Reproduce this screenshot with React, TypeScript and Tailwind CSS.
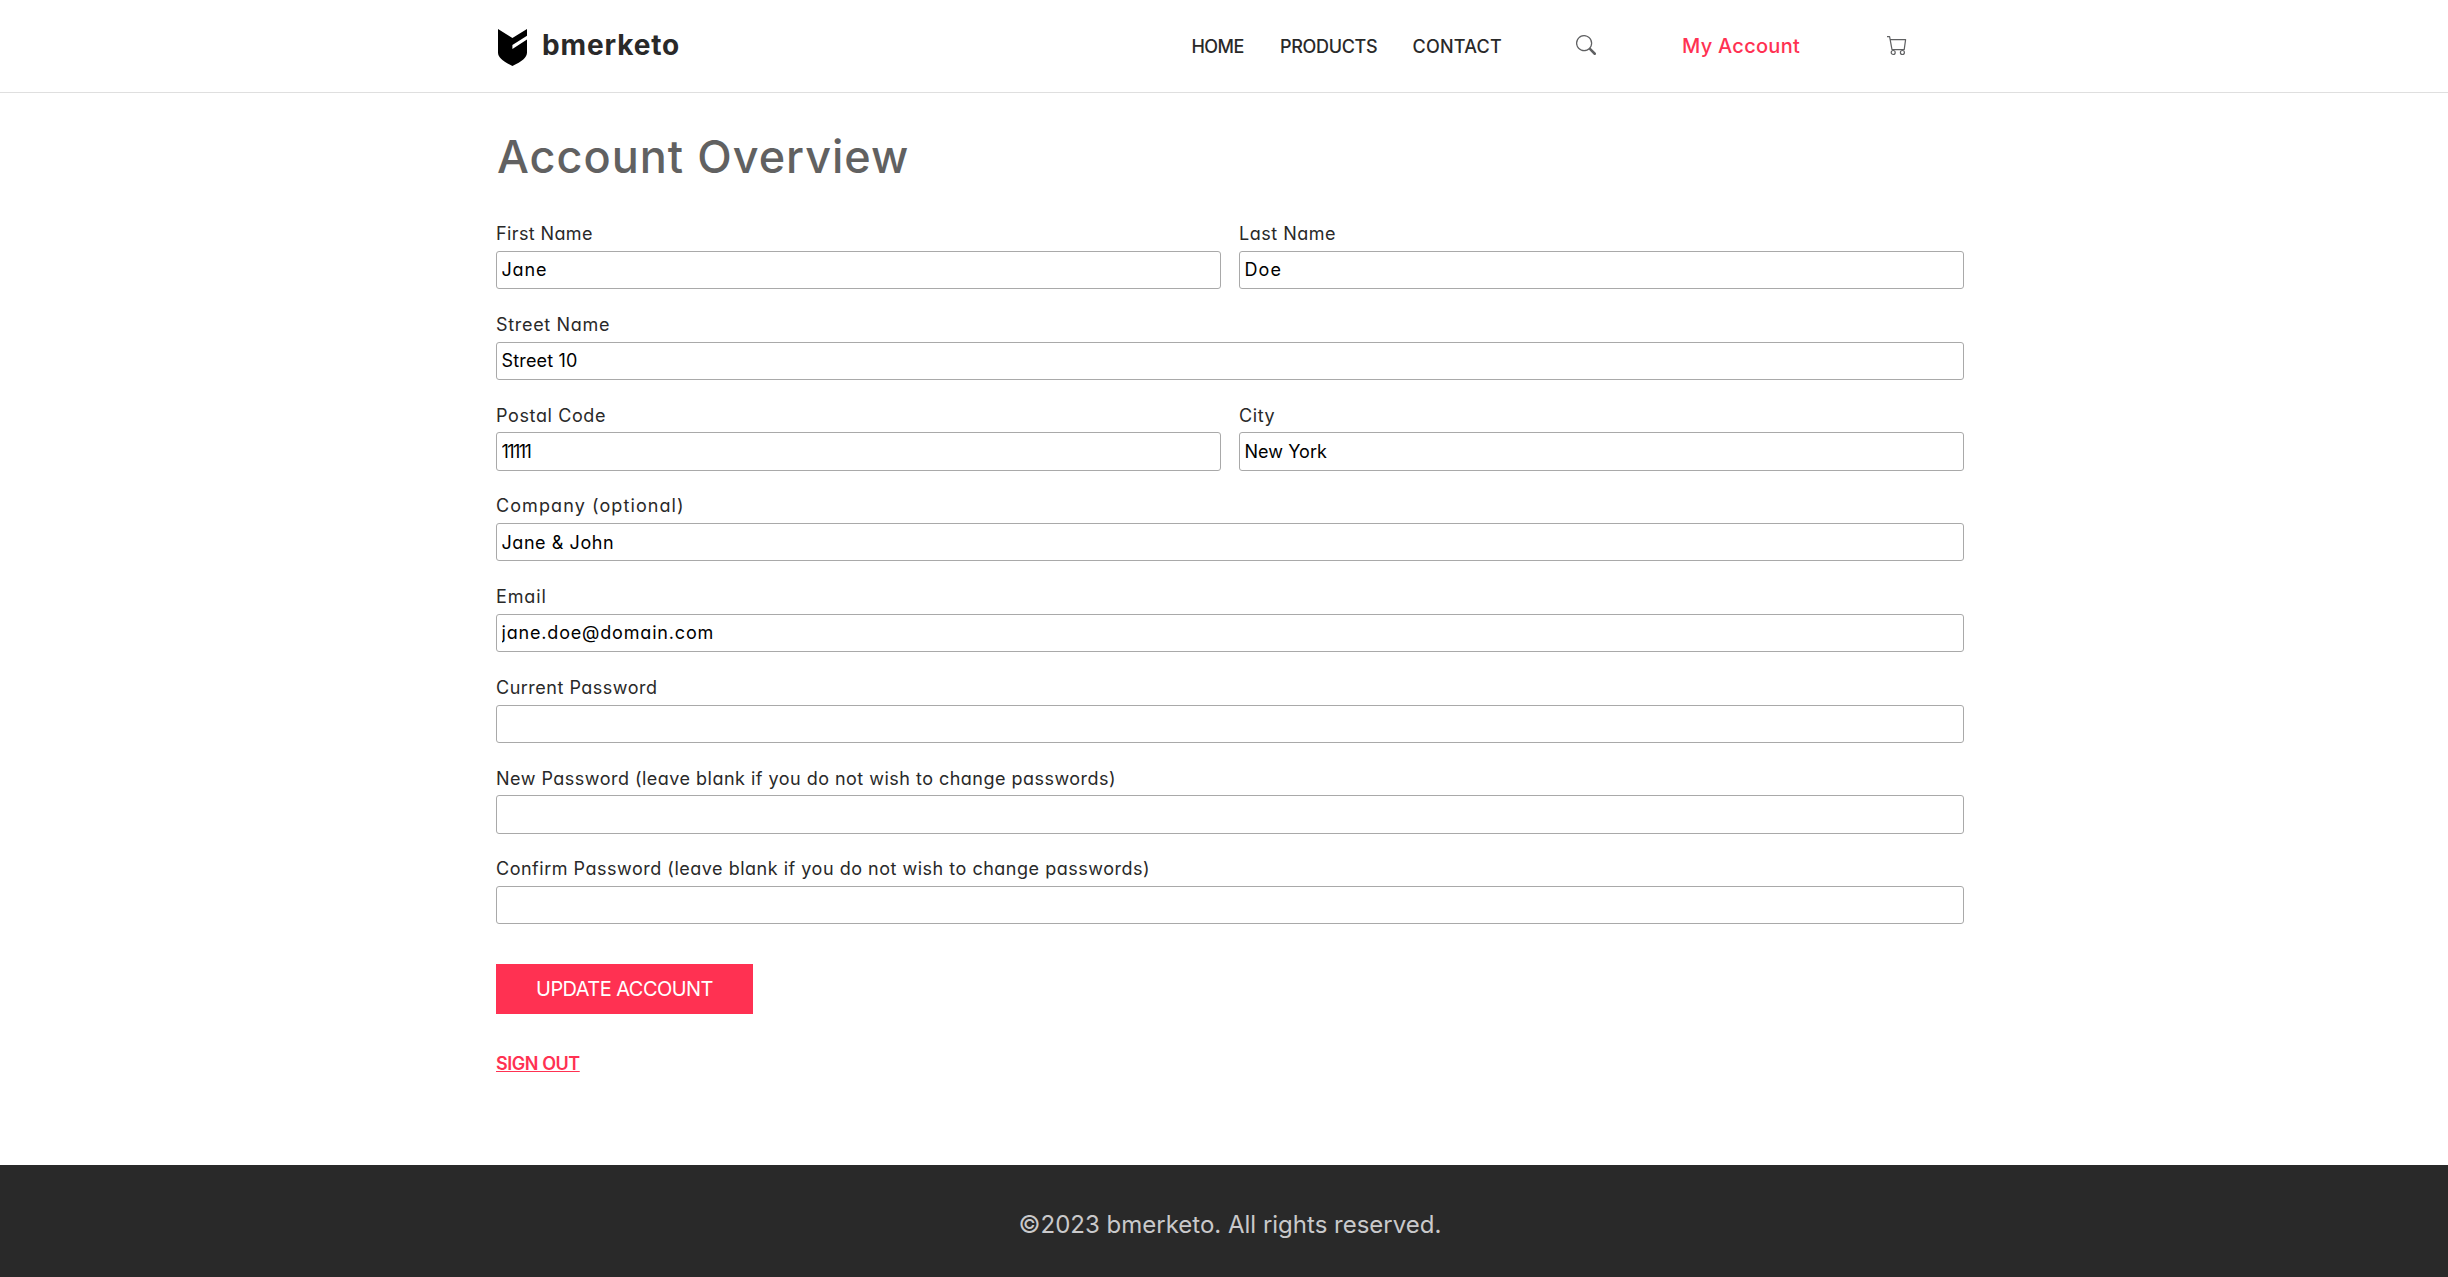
import { BsSearch } from "react-icons/bs";

type FieldProps = {
  label: string;
  labelSpacing: string;
  value?: string;
  valueSpacing?: string;
  type?: string;
};

function Field({ label, labelSpacing, value = "", valueSpacing = "", type = "text" }: FieldProps) {
  return (
    <label className="flex h-[90.75px] min-w-0 flex-1 flex-col">
      <span className={`mb-[3.97px] h-[27px] whitespace-nowrap text-[18px] leading-[27px] text-[#292929] ${labelSpacing}`}>
        {label}
      </span>
      <input
        type={type}
        defaultValue={value}
        className={`h-[38.05px] w-full rounded-[3px] border border-[#a9a9a9] bg-white pl-[4.5px] text-[18px] text-black outline-none [font-feature-settings:'cv11'] ${valueSpacing}`}
      />
    </label>
  );
}

function LogoMark() {
  return (
    <svg width="29" height="37" viewBox="0 0 29 37" fill="#000">
      <path d="M0 0 14.4 9 29 0V6.7L14.4 16V20L29 10.4V23.5C29 28.5 24 32.5 14.4 37 5 32.5 0 28.5 0 23.5Z" />
    </svg>
  );
}

function CartIcon() {
  return (
    <svg width="20" height="20" viewBox="0 0 20 20" fill="none" stroke="#5f6062" strokeWidth="1.2">
      <path d="M0 .6H2.6L5 13.6H17.2L18.6 3.6H3.2" strokeLinejoin="round" />
      <circle cx="6.2" cy="16.5" r="2" />
      <circle cx="15.4" cy="16.5" r="2" />
    </svg>
  );
}

export default function App() {
  return (
    <div className="flex min-h-screen flex-col bg-white font-['Inter',sans-serif] text-[#292929] [font-feature-settings:'cv11']">
      <header className="flex h-[93px] justify-center border-b border-[#dfdfdf] pl-3">
        <div className="flex h-[92px] w-[1468px] items-center pl-0.5 pr-[57px]">
          <a className="flex items-center">
            <span className="mt-[3px]"><LogoMark /></span>
            <span className="-mt-[3px] ml-[15px] text-[28px] font-bold leading-[42px] tracking-[0.86px]">bmerketo</span>
          </a>
          <nav className="ml-auto flex items-center text-[18px] font-medium leading-[27px]">
            <a className="w-[88.5px] tracking-[-0.54px]">HOME</a>
            <a className="w-[132.5px] tracking-[-0.33px]">PRODUCTS</a>
            <a className="w-[163.5px] tracking-[0.23px]">CONTACT</a>
          </nav>
          <BsSearch className="-mt-0.5 size-5 text-[#5f6062]" />
          <a className="ml-[86px] w-[205px] whitespace-nowrap text-[20px] font-medium leading-[30px] tracking-[0.28px] text-[#ff3152]">
            My Account
          </a>
          <CartIcon />
        </div>
      </header>

      <main className="flex flex-1 justify-center pl-3">
        <div className="w-[1468px]">
          <h1 className="mt-[37px] h-[54px] whitespace-nowrap pl-px text-[45px] font-medium leading-[54px] tracking-[1px] text-[#616161]">
            Account Overview
          </h1>
          <form className="mt-9">
            <div className="flex gap-[18px]">
              <Field label="First Name" labelSpacing="tracking-[0.38px]" value="Jane" valueSpacing="tracking-[0.85px]" />
              <Field label="Last Name" labelSpacing="tracking-[0.5px]" value="Doe" valueSpacing="tracking-[1.1px]" />
            </div>
            <Field label="Street Name" labelSpacing="tracking-[0.68px]" value="Street 10" valueSpacing="tracking-[0.17px]" />
            <div className="flex gap-[18px]">
              <Field label="Postal Code" labelSpacing="tracking-[0.62px]" value="11111" valueSpacing="tracking-[-1.6px]" />
              <Field label="City" labelSpacing="tracking-[0.58px]" value="New York" valueSpacing="tracking-[0.04px]" />
            </div>
            <Field label="Company (optional)" labelSpacing="tracking-[1.09px]" value="Jane & John" valueSpacing="tracking-[0.56px]" />
            <Field label="Email" labelSpacing="tracking-[0.88px]" value="jane.doe@domain.com" valueSpacing="tracking-[0.82px]" />
            <Field label="Current Password" labelSpacing="tracking-[0.5px]" type="password" />
            <Field
              label="New Password (leave blank if you do not wish to change passwords)"
              labelSpacing="tracking-[0.48px]"
              type="password"
            />
            <Field
              label="Confirm Password (leave blank if you do not wish to change passwords)"
              labelSpacing="tracking-[0.51px]"
              type="password"
            />
            <button
              type="button"
              className="mt-[18px] flex h-[50px] w-[257px] items-center justify-center whitespace-nowrap bg-[#ff3152] text-[20px] tracking-[-0.55px] text-white"
            >
              UPDATE ACCOUNT
            </button>
          </form>
          <a className="mt-9 block h-[27px] w-fit whitespace-nowrap text-[18px] font-semibold leading-[27px] tracking-[-0.45px] text-[#ff3152] underline decoration-1 underline-offset-1">
            SIGN OUT
          </a>
        </div>
      </main>

      <footer className="flex h-28 items-center justify-center bg-[#292929] pl-3 pt-2 text-[24px] leading-9 text-[#c9c9cb]">
        ©2023 bmerketo. All rights reserved.
      </footer>
    </div>
  );
}
